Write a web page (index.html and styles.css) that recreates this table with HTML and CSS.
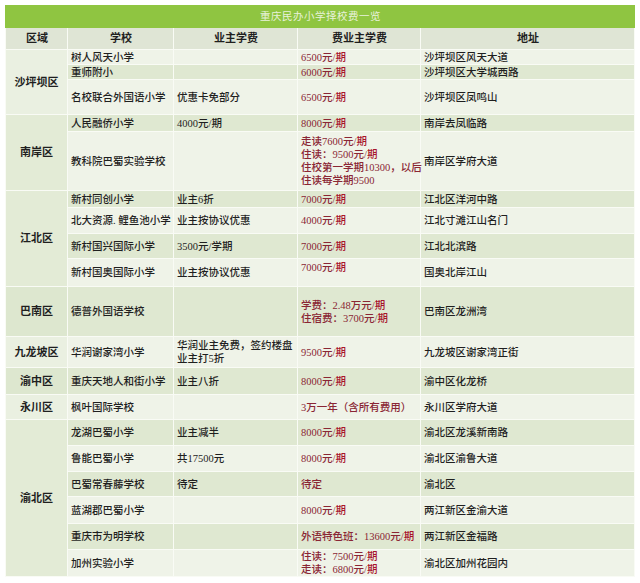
FILE: index.html
```html
<!DOCTYPE html>
<html lang="zh-CN">
<head>
<meta charset="utf-8">
<title>重庆民办小学择校费一览</title>
<link rel="stylesheet" href="styles.css">
</head>
<body>
<div class="sheet">
<table class="fees">
<colgroup><col class="c-area"><col class="c-school"><col class="c-owner"><col class="c-fee"><col class="c-addr"></colgroup>
<thead>
<tr class="title-row"><th colspan="5">重庆民办小学择校费一览</th></tr>
<tr class="head-row"><th>区域</th><th>学校</th><th>业主学费</th><th>费业主学费</th><th>地址</th></tr>
</thead>
<tbody>
<tr class="lt h15"><td class="area area-lt" rowspan="3">沙坪坝区</td><td>树人风天小学</td><td></td><td class="fee">6500元/<b>期</b></td><td>沙坪坝区风天大道</td></tr>
<tr class="dk h15"><td>重师附小</td><td></td><td class="fee">6000元/<b>期</b></td><td>沙坪坝区大学城西路</td></tr>
<tr class="lt h35"><td>名校联合外国语小学</td><td>优惠卡免部分</td><td class="fee">6500元/<b>期</b></td><td>沙坪坝区凤鸣山</td></tr>

<tr class="dk h17"><td class="area" rowspan="2">南岸区</td><td>人民融侨小学</td><td>4000元/期</td><td class="fee">8000元/<b>期</b></td><td>南岸去凤临路</td></tr>
<tr class="lt h59"><td>教科院巴蜀实验学校</td><td></td><td class="fee">走读7600元/<b>期</b><br>住读：9500元/<b>期</b><br>住校第一学期10300，以后<br>住读每学期9500</td><td>南岸区学府大道</td></tr>

<tr class="dk h17"><td class="area" rowspan="4">江北区</td><td>新村同创小学</td><td>业主6折</td><td class="fee">7000元/<b>期</b></td><td>江北区洋河中路</td></tr>
<tr class="lt h26"><td>北大资源. 鲤鱼池小学</td><td>业主按协议优惠</td><td class="fee">4000元/<b>期</b></td><td>江北寸滩江山名门</td></tr>
<tr class="dk h25"><td>新村国兴国际小学</td><td>3500元/学期</td><td class="fee">7000元/<b>期</b></td><td>江北北滨路</td></tr>
<tr class="lt h28"><td>新村国奥国际小学</td><td>业主按协议优惠</td><td class="fee top">7000元/<b>期</b></td><td>国奥北岸江山</td></tr>

<tr class="dk h50"><td class="area area-dk">巴南区</td><td>德普外国语学校</td><td></td><td class="fee">学费：2.48万元/<b>期</b><br>住宿费：3700元/<b>期</b></td><td>巴南区龙洲湾</td></tr>
<tr class="lt h31"><td class="area area-lt">九龙坡区</td><td>华润谢家湾小学</td><td>华润业主免费，签约楼盘<br>业主打5折</td><td class="fee">9500元/<b>期</b></td><td>九龙坡区谢家湾正街</td></tr>
<tr class="dk h27"><td class="area area-dk">渝中区</td><td>重庆天地人和街小学</td><td>业主八折</td><td class="fee">8000元/<b>期</b></td><td>渝中区化龙桥</td></tr>
<tr class="lt h25"><td class="area area-lt">永川区</td><td>枫叶国际学校</td><td></td><td class="fee">3万一年（含所有费用）</td><td>永川区学府大道</td></tr>

<tr class="dk h26"><td class="area" rowspan="6">渝北区</td><td>龙湖巴蜀小学</td><td>业主减半</td><td class="fee">8000元/<b>期</b></td><td>渝北区龙溪新南路</td></tr>
<tr class="lt h26"><td>鲁能巴蜀小学</td><td>共17500元</td><td class="fee">8000元/<b>期</b></td><td>渝北区渝鲁大道</td></tr>
<tr class="dk h25"><td>巴蜀常春藤学校</td><td>待定</td><td class="fee">待定</td><td>渝北区</td></tr>
<tr class="lt h27"><td>蓝湖郡巴蜀小学</td><td></td><td class="fee">8000元/<b>期</b></td><td>两江新区金渝大道</td></tr>
<tr class="dk h26"><td>重庆市为明学校</td><td></td><td class="fee">外语特色班：13600元/<b>期</b></td><td>两江新区金福路</td></tr>
<tr class="lt h26"><td>加州实验小学</td><td></td><td class="fee">住读：7500元/<b>期</b><br>走读：6800元/<b>期</b></td><td>渝北区加州花园内</td></tr>
</tbody>
</table>
</div>
</body>
</html>
```

FILE: styles.css
```css
html, body {
  margin: 0;
  padding: 0;
  background: #ffffff;
}

body {
  font-family: "Liberation Serif", "Noto Sans CJK SC", serif;
  color: #1f1f1f;
}

.sheet {
  padding: 5px 6px 5px 5px;
}

.fees {
  width: 629px;
  table-layout: fixed;
  border-collapse: collapse;
  font-size: 10.5px;
  line-height: 13px;
}

.c-area { width: 62px; }
.c-school { width: 106px; }
.c-owner { width: 124px; }
.c-fee { width: 123px; }
.c-addr { width: 214px; }

.fees th,
.fees td {
  border: 1px solid #f9fbf5;
  padding: 0 2px 0 3px;
  white-space: nowrap;
  vertical-align: middle;
  text-align: left;
  font-weight: 500;
}

.title-row th {
  height: 21px;
  background: #8fc541;
  color: #e8f2da;
  font-weight: 400;
  font-size: 10.5px;
  text-align: center;
  letter-spacing: 0.5px;
  border-color: #8fc541;
}

.head-row th {
  height: 21px;
  background: #dfe5d5;
  text-align: center;
  font-weight: 700;
  font-size: 11px;
}

.lt td { background: #eff3e8; }
.dk td { background: #dfe8d1; }

.fees td.area {
  background: #e3ebd6;
  text-align: center;
  font-weight: 700;
  font-size: 11px;
  padding: 0;
}
.fees td.area-lt { background: #eaf0e1; }
.fees td.area-dk { background: #dde7cf; }

.fee { color: #8a2634; }
.fee b { font-weight: 500; color: #a8142c; }
.fees td.top { vertical-align: top; padding-top: 2px; }

.h15 { height: 15px; }
.h17 { height: 17px; }
.h25 { height: 25px; }
.h26 { height: 26px; }
.h27 { height: 27px; }
.h28 { height: 28px; }
.h31 { height: 31px; }
.h35 { height: 35px; }
.h50 { height: 50px; }
.h59 { height: 59px; }
```
